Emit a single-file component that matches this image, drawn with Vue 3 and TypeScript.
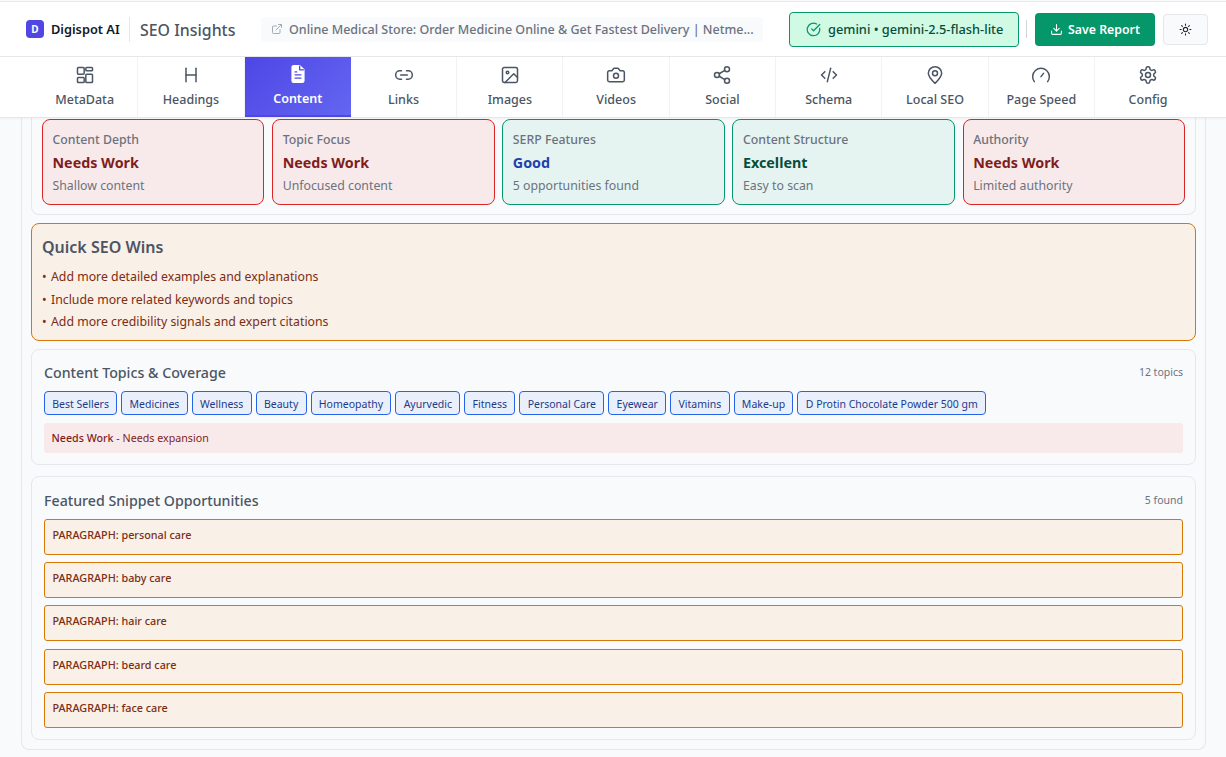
<script setup lang="ts">
interface Tab { name: string; paths: string[]; }
const tabs: Tab[] = [
  { name: 'MetaData', paths: ['M4 3h6a1 1 0 0 1 1 1v6a1 1 0 0 1-1 1H4a1 1 0 0 1-1-1V4a1 1 0 0 1 1-1z', 'M14 3h6a1 1 0 0 1 1 1v2a1 1 0 0 1-1 1h-6a1 1 0 0 1-1-1V4a1 1 0 0 1 1-1z', 'M4 15h6a1 1 0 0 1 1 1v4a1 1 0 0 1-1 1H4a1 1 0 0 1-1-1v-4a1 1 0 0 1 1-1z', 'M14 11h6a1 1 0 0 1 1 1v8a1 1 0 0 1-1 1h-6a1 1 0 0 1-1-1v-8a1 1 0 0 1 1-1z'] },
  { name: 'Headings', paths: ['M6 4v16', 'M18 4v16', 'M6 12h12'] },
  { name: 'Content', paths: [] },
  { name: 'Links', paths: ['M9 17H7A5 5 0 0 1 7 7h2', 'M15 7h2a5 5 0 1 1 0 10h-2', 'M8 12h8'] },
  { name: 'Images', paths: ['M5 3h14a2 2 0 0 1 2 2v14a2 2 0 0 1-2 2H5a2 2 0 0 1-2-2V5a2 2 0 0 1 2-2z', 'M9 10.5a1.5 1.5 0 1 0 0-3 1.5 1.5 0 0 0 0 3z', 'M21 15l-4.5-4.5L6 21'] },
  { name: 'Videos', paths: ['M14.5 4h-5L7 7H4a2 2 0 0 0-2 2v9a2 2 0 0 0 2 2h16a2 2 0 0 0 2-2V9a2 2 0 0 0-2-2h-3l-2.5-3z', 'M12 16a3 3 0 1 0 0-6 3 3 0 0 0 0 6z'] },
  { name: 'Social', paths: ['M18 8a3 3 0 1 0 0-6 3 3 0 0 0 0 6z', 'M6 15a3 3 0 1 0 0-6 3 3 0 0 0 0 6z', 'M18 22a3 3 0 1 0 0-6 3 3 0 0 0 0 6z', 'M8.6 13.5l6.8 4', 'M15.4 6.5l-6.8 4'] },
  { name: 'Schema', paths: ['M7 8l-4 4 4 4', 'M17 8l4 4-4 4', 'M14 4l-4 16'] },
  { name: 'Local SEO', paths: ['M12 22s8-7.6 8-12a8 8 0 1 0-16 0c0 4.4 8 12 8 12z', 'M12 13a3 3 0 1 0 0-6 3 3 0 0 0 0 6z'] },
  { name: 'Page Speed', paths: ['M4 20a10 10 0 1 1 16 0', 'M12 14l3-4'] },
  { name: 'Config', paths: ['M12.2 2h-.4a2 2 0 0 0-2 2v.2a2 2 0 0 1-1 1.7l-.4.3a2 2 0 0 1-2 0l-.2-.1a2 2 0 0 0-2.7.7l-.2.4a2 2 0 0 0 .7 2.7l.2.1a2 2 0 0 1 1 1.7v.5a2 2 0 0 1-1 1.7l-.2.1a2 2 0 0 0-.7 2.7l.2.4a2 2 0 0 0 2.7.7l.2-.1a2 2 0 0 1 2 0l.4.3a2 2 0 0 1 1 1.7v.2a2 2 0 0 0 2 2h.4a2 2 0 0 0 2-2v-.2a2 2 0 0 1 1-1.7l.4-.3a2 2 0 0 1 2 0l.2.1a2 2 0 0 0 2.7-.7l.2-.4a2 2 0 0 0-.7-2.7l-.2-.1a2 2 0 0 1-1-1.7v-.5a2 2 0 0 1 1-1.7l.2-.1a2 2 0 0 0 .7-2.7l-.2-.4a2 2 0 0 0-2.7-.7l-.2.1a2 2 0 0 1-2 0l-.4-.3a2 2 0 0 1-1-1.7V4a2 2 0 0 0-2-2z', 'M12 15a3 3 0 1 0 0-6 3 3 0 0 0 0 6z'] },
];
const metrics = [
  { title: 'Content Depth', value: 'Needs Work', note: 'Shallow content', tone: 'bad' },
  { title: 'Topic Focus', value: 'Needs Work', note: 'Unfocused content', tone: 'bad' },
  { title: 'SERP Features', value: 'Good', note: '5 opportunities found', tone: 'good' },
  { title: 'Content Structure', value: 'Excellent', note: 'Easy to scan', tone: 'great' },
  { title: 'Authority', value: 'Needs Work', note: 'Limited authority', tone: 'bad' },
];
const wins = ['Add more detailed examples and explanations', 'Include more related keywords and topics', 'Add more credibility signals and expert citations'];
const topics = ['Best Sellers', 'Medicines', 'Wellness', 'Beauty', 'Homeopathy', 'Ayurvedic', 'Fitness', 'Personal Care', 'Eyewear', 'Vitamins', 'Make-up', 'D Protin Chocolate Powder 500 gm'];
const snippets = ['personal care', 'baby care', 'hair care', 'beard care', 'face care'];
</script>

<template>
  <div class="page">
    <header class="header">
      <div class="logo">D</div>
      <span class="brand">Digispot AI</span>
      <span class="rule tall"></span>
      <span class="title">SEO Insights</span>
      <div class="url">
        <svg class="ico12" viewBox="0 0 24 24"><path d="M18 13v6a2 2 0 0 1-2 2H5a2 2 0 0 1-2-2V8a2 2 0 0 1 2-2h6M15 3h6v6M10 14L21 3" /></svg>
        <span>Online Medical Store: Order Medicine Online &amp; Get Fastest Delivery | Netme...</span>
      </div>
      <div class="status">
        <svg class="ico16" viewBox="0 0 24 24"><path d="M21.8 10A10 10 0 1 1 17 3.3" /><path d="M9 11l3 3L22 4" /></svg>
        <span>gemini • gemini-2.5-flash-lite</span>
      </div>
      <span class="rule short"></span>
      <button class="save">
        <svg class="ico13" viewBox="0 0 24 24"><path d="M21 15v4a2 2 0 0 1-2 2H5a2 2 0 0 1-2-2v-4M7 10l5 5 5-5M12 15V3" /></svg>
        Save Report
      </button>
      <button class="theme" aria-label="Theme">
        <svg class="ico13" viewBox="0 0 24 24"><circle cx="12" cy="12" r="4" /><path d="M12 2v2M12 20v2M4.9 4.9l1.4 1.4M17.7 17.7l1.4 1.4M2 12h2M20 12h2M4.9 19.1l1.4-1.4M17.7 6.3l1.4-1.4" /></svg>
      </button>
    </header>

    <nav class="tabs">
      <div v-for="t in tabs" :key="t.name" class="tab" :class="{ active: t.name === 'Content' }">
        <svg v-if="t.name === 'Content'" class="tab-ico" viewBox="0 0 24 24">
          <path class="doc" d="M17 22H7a2 2 0 0 1-2-2V4a2 2 0 0 1 2-2h7l5 5v13a2 2 0 0 1-2 2z" />
          <path class="doc-line" d="M14 2.5V7h4.5M8.5 9.5h2M8.5 13h7M8.5 17h7" />
        </svg>
        <svg v-else class="tab-ico" viewBox="0 0 24 24"><path v-for="p in t.paths" :key="p" :d="p" /></svg>
        <span>{{ t.name }}</span>
      </div>
    </nav>

    <main class="outer">
      <section class="panel metrics-panel">
        <div class="metrics">
          <div v-for="m in metrics" :key="m.title" class="metric" :class="m.tone">
            <div class="m-title">{{ m.title }}</div>
            <div class="m-value">{{ m.value }}</div>
            <div class="m-note">{{ m.note }}</div>
          </div>
        </div>
      </section>

      <section class="wins">
        <h2>Quick SEO Wins</h2>
        <div v-for="w in wins" :key="w" class="win"><span class="bullet">•</span>{{ w }}</div>
      </section>

      <section class="panel topics">
        <div class="head"><h3>Content Topics &amp; Coverage</h3><span>12 topics</span></div>
        <div class="chips"><span v-for="t in topics" :key="t" class="chip">{{ t }}</span></div>
        <div class="notice"><b>Needs Work</b> - Needs expansion</div>
      </section>

      <section class="panel snippets">
        <div class="head"><h3>Featured Snippet Opportunities</h3><span>5 found</span></div>
        <div class="list">
          <div v-for="s in snippets" :key="s" class="snippet">PARAGRAPH: {{ s }}</div>
        </div>
      </section>
    </main>
  </div>
</template>

<style>
html, body { margin: 0; background: #f9fafc; }
</style>

<style scoped>
* { box-sizing: border-box; }
.page { width: 1226px; height: 757px; overflow: hidden; background: #f9fafc; font-family: "Noto Sans", "Open Sans", sans-serif; color: #4b5563; padding-top: 1px; }
svg { fill: none; stroke: currentColor; stroke-width: 2; stroke-linecap: round; stroke-linejoin: round; flex: none; display: block; }
.header { height: 56px; border-top: 1px solid #e9eaec; border-bottom: 1px solid #e5e7eb; background: #fff; display: flex; align-items: center; padding-left: 26px; }
.logo { width: 18px; height: 18px; border-radius: 4px; background: #4f46e5; color: #fff; font-size: 10px; font-weight: 700; display: flex; align-items: center; justify-content: center; }
.brand { margin-left: 7px; width: 69px; font-size: 12.8px; font-weight: 600; color: #111827; white-space: nowrap; }
.rule { width: 1px; background: #e5e7eb; flex: none; }
.tall { height: 25px; margin-left: 9px; }
.short { height: 18px; margin-left: 7px; background: #d1d5db; }
.title { margin-left: 10px; width: 121px; padding-top: 1px; font-size: 15.9px; font-weight: 500; color: #4b5563; white-space: nowrap; }
.url { width: 502px; height: 25px; border-radius: 4px; background: #f9fafb; display: flex; align-items: center; gap: 6px; padding-left: 10px; color: #6b7280; font-size: 12.5px; font-weight: 500; white-space: nowrap; overflow: hidden; }
.ico12 { width: 12px; height: 12px; color: #9ca3af; stroke-width: 1.8; }
.ico13 { width: 13px; height: 13px; }
.ico16 { width: 15px; height: 15px; color: #059669; }
.status { margin-left: 26px; width: 230px; height: 35px; border: 1px solid #059669; border-radius: 4px; background: #d1fae5; display: flex; align-items: center; gap: 7px; padding-left: 16px; font-size: 12.8px; font-weight: 500; color: #064e3b; white-space: nowrap; }
.save { margin-left: 8px; width: 120px; height: 33px; border: 0; border-radius: 4px; background: #059669; color: #fff; font: 600 12.3px "Noto Sans", sans-serif; display: flex; align-items: center; justify-content: center; gap: 5px; white-space: nowrap; }
.theme { margin-left: 8px; width: 45px; height: 31px; border: 1px solid #e5e7eb; border-radius: 4px; background: #f9fafb; color: #1f2937; display: flex; align-items: center; justify-content: center; }
.tabs { height: 61px; background: #fff; border-bottom: 1px solid #e5e7eb; padding-left: 32px; display: flex; box-shadow: 0 1px 2px rgba(0,0,0,.04); position: relative; z-index: 1; }
.tab { width: 106.3px; height: 60px; border-right: 1px solid #f1f2f4; display: flex; flex-direction: column; align-items: center; padding-top: 8px; font-size: 12.5px; font-weight: 500; color: #4b5563; }
.tab:last-child { border-right: 0; }
.tab-ico { width: 20px; height: 20px; stroke-width: 1.8; margin-bottom: 6px; color: #4b5563; }
.tab.active { background: linear-gradient(135deg, #4f46e5, #6366f1); border-bottom: 2px solid #4f46e5; border-right: 0; color: #fff; font-weight: 600; padding-top: 7px; }
.tab.active .tab-ico { color: #fff; }
.doc { fill: #fff; }
.doc-line { stroke: #5048e5; stroke-width: 1.6; }
.outer { width: 1185px; height: 632px; margin-left: 21px; border: 1px solid #e5e7eb; border-top: 0; border-radius: 0 0 8px 8px; padding: 0 9px; display: flex; flex-direction: column; background: #f9fafc; }
.panel { border: 1px solid #e5e7eb; border-radius: 8px; background: #f9fafc; }
.metrics-panel { border-top: 0; border-radius: 0 0 8px 8px; padding: 1px 10px 9px; height: 97px; }
.metrics { display: grid; grid-template-columns: repeat(5, 1fr); gap: 7.8px; }
.metric { height: 86px; border: 1px solid; border-radius: 8px; padding: 11px 9.5px 0; }
.metric.bad { background: #f8eaea; border-color: #dc2626; }
.metric.good, .metric.great { background: #e6f4f1; border-color: #059669; }
.m-title { font-size: 12.3px; font-weight: 500; color: #6b7280; line-height: 18px; }
.m-value { margin-top: 3px; font-size: 14.3px; font-weight: 700; line-height: 22px; }
.bad .m-value { color: #7f1d1d; }
.good .m-value { color: #1e40af; }
.great .m-value { color: #064e3b; }
.m-note { font-size: 12.3px; color: #6b7280; line-height: 18px; margin-top: 3px; }
.wins { margin-top: 8px; height: 118px; border: 1px solid #d97706; border-radius: 8px; background: #f9f0e8; padding: 11px 10px; }
.wins h2 { margin: 0 0 7px; font-size: 16px; font-weight: 600; color: #4b5563; line-height: 24px; }
.win { display: flex; font-size: 12.3px; color: #7c2d12; line-height: 22.5px; }
.bullet { width: 9px; flex: none; }
.topics { margin-top: 8px; height: 116px; padding: 11px 12px 0; }
.head { display: flex; justify-content: space-between; align-items: center; height: 22px; }
.head h3 { margin: 0; font-size: 14.2px; font-weight: 500; color: #4b5563; }
.head span { font-size: 10.5px; color: #6b7280; }
.chips { margin-top: 8px; display: flex; gap: 4px; }
.chip { height: 24px; border: 1px solid #2563eb; border-radius: 4px; background: #e9f0fb; color: #1e3a8a; font-size: 10.5px; padding: 1px 7.3px 0; display: flex; align-items: center; white-space: nowrap; }
.notice { margin-top: 8px; height: 30px; border-radius: 3px; background: #f8eaea; color: #7f1d1d; font-size: 10.7px; line-height: 30px; padding-left: 7.5px; white-space: pre; }
.notice b { font-weight: 500; }
.snippets { margin-top: 11px; height: 264px; padding: 12px 12px 0; }
.list { margin-top: 8px; display: flex; flex-direction: column; gap: 7.2px; }
.snippet { height: 36px; border: 1px solid #d97706; border-radius: 3px; background: #f9f0e8; color: #7c2d12; font-size: 10.8px; font-weight: 500; padding: 0 7.5px 5px; display: flex; align-items: center; }
</style>
